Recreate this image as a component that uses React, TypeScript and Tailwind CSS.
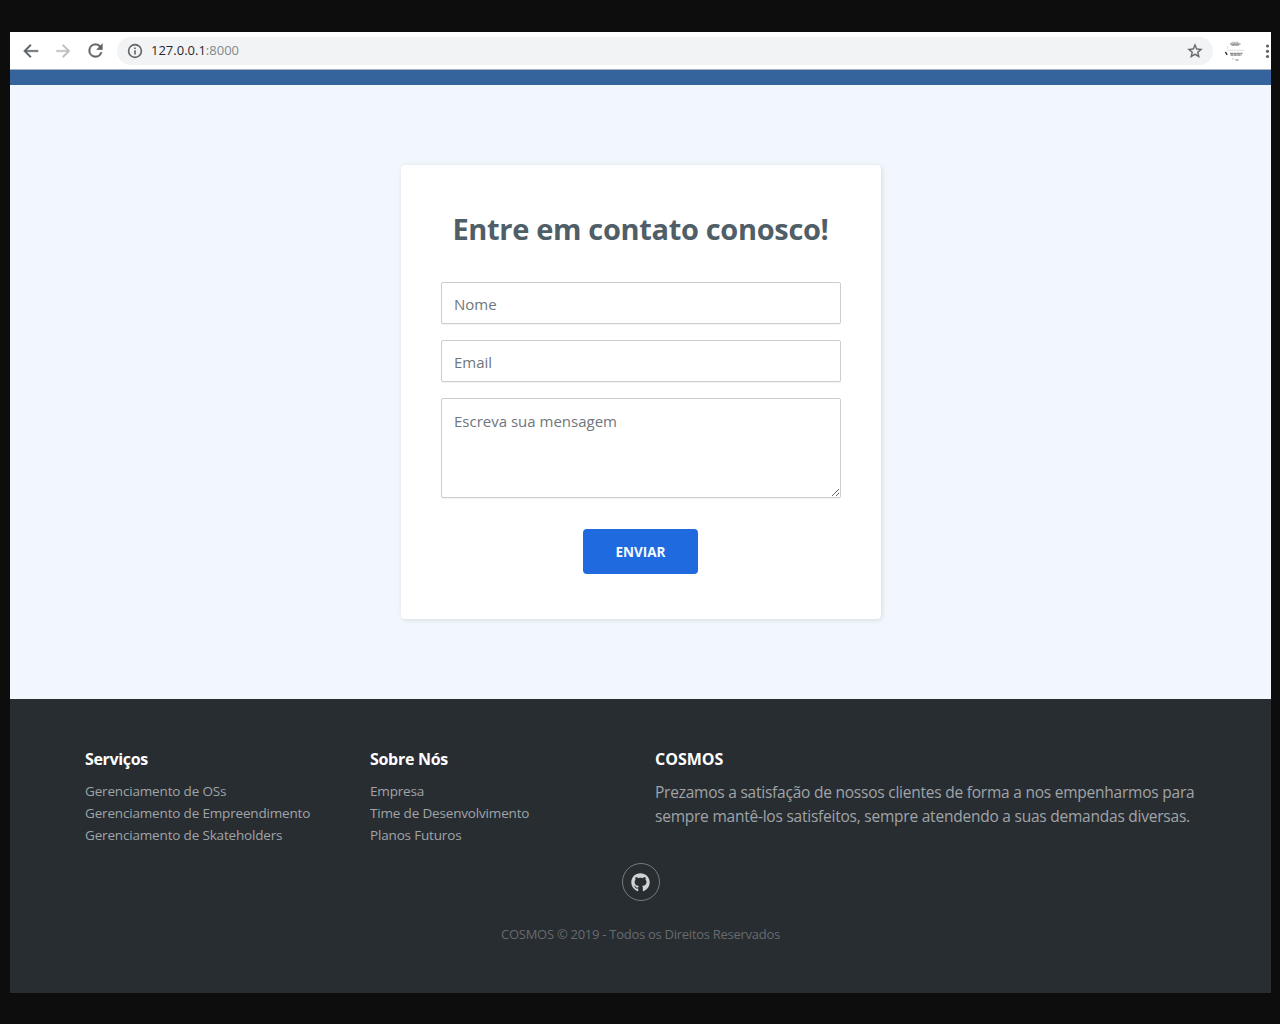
import type { ReactNode } from "react";
import { FaGithub } from "react-icons/fa";

function BrowserBar() {
  return (
    <div className="flex h-[38px] items-center overflow-hidden border-b border-[#a9b3bf] bg-white pl-[11px]">
      <div className="flex shrink-0 items-center gap-3">
        <svg className="size-5" viewBox="0 0 24 24" fill="#5f6368">
          <path d="M20.500 11H6.830l5.590-5.590L11 4l-8 8 8 8 1.410-1.410L6.830 13H20.500v-2z" stroke="#5f6368" strokeWidth=".4" />
        </svg>
        <svg className="size-5" viewBox="0 0 24 24" fill="#bcbec1">
          <path d="M12.500 4l-1.410 1.410L16.670 11H4v2h12.670l-5.580 5.590L12.500 20l8-8z" stroke="#bcbec1" strokeWidth=".4" />
        </svg>
        <svg className="size-[21px]" viewBox="0 0 24 24" fill="#5f6368">
          <path d="M17.65 6.35A7.958 7.958 0 0 0 12 4a8 8 0 1 0 7.73 10h-2.08A6 6 0 1 1 12 6c1.66 0 3.14.69 4.22 1.78L13 11h7V4l-2.35 2.35z" stroke="#5f6368" strokeWidth=".3" />
        </svg>
      </div>
      <div className="ml-[11px] flex h-7 w-[1096px] shrink-0 items-center rounded-full bg-[#f1f3f4] pr-[9px] pl-[10px]">
        <svg className="size-4" viewBox="0 0 16 16" fill="none" stroke="#5f6368" strokeWidth="1.600">
          <circle cx="8" cy="8" r="6.400" />
          <path d="M8 7.200v4.200M8 4.400V6" />
        </svg>
        <span className="ml-2 text-[13px] text-[#26292d]">
          127.0.0.1<span className="text-[#83878b]">:8000</span>
        </span>
        <svg className="ml-auto size-[18px]" viewBox="0 0 24 24" fill="#5f6368">
          <path
            d="M22 9.24l-7.19-.62L12 2 9.19 8.63 2 9.24l5.46 4.73L5.82 21 12 17.27 18.18 21l-1.63-7.03L22 9.24zM12 15.4l-3.76 2.27 1-4.28-3.32-2.88 4.38-.38L12 6.1l1.71 4.04 4.38.38-3.32 2.88 1 4.28L12 15.4z"
            stroke="#5f6368"
            strokeWidth=".3"
          />
        </svg>
      </div>
      <svg className="ml-3 h-5 w-5 shrink-0" viewBox="0 0 20 20" fill="none">
        <path d="M6.500 1.300h7" stroke="#b5b5b5" strokeWidth="1" />
        <path d="M5 2.800h10.500M6.500 4.200h7.500" stroke="#8f8f8f" strokeWidth="1.200" strokeDasharray="2.500 .3" />
        <path d="M3 5l-1 3M2 9.300h17" stroke="#d5d5d5" strokeWidth=".8" />
        <path d="M5 12.300h12.500M5.500 14h11" stroke="#8a8a8a" strokeWidth="1.300" strokeDasharray="3 .4" />
        <path d="M.6 11l1.500 3" stroke="#333" strokeWidth="1.500" />
        <path d="M10.500 19h3" stroke="#777" strokeWidth="1" />
        <path d="M7 18h2" stroke="#bbb" strokeWidth=".8" />
      </svg>
      <svg className="ml-5 h-4 w-[6px] shrink-0" viewBox="0 0 6 16" fill="#5f6368">
        <circle cx="2.500" cy="3" r="1.600" />
        <circle cx="2.500" cy="8.300" r="1.600" />
        <circle cx="2.500" cy="13.500" r="1.600" />
      </svg>
    </div>
  );
}

const fieldClass =
  "block w-full rounded-[2px] border border-[#cbced1] bg-white px-3 text-[15px] text-[#495057] shadow-[0_1px_1px_rgba(0,0,0,0.05)] outline-none placeholder:text-[#6f767c] placeholder:opacity-100";

function ContactForm() {
  return (
    <form
      className="h-[454px] w-[480px] rounded bg-white px-10 pt-11 shadow-[1px_1px_5px_rgba(0,0,0,0.12)]"
      onSubmit={(e) => e.preventDefault()}
    >
      <h1 className="pr-px text-center text-[29px] leading-10 font-bold tracking-[-0.33px] whitespace-nowrap text-[#505e68]">
        Entre em contato conosco!
      </h1>
      <input className={`${fieldClass} mt-[33px] h-[42px] pt-px`} placeholder="Nome" />
      <input className={`${fieldClass} mt-4 h-[42px] pt-px`} placeholder="Email" />
      <textarea
        className={`${fieldClass} mt-4 h-[100px] resize pt-[10px] leading-6`}
        placeholder="Escreva sua mensagem"
      />
      <button
        type="submit"
        className="mt-[31px] ml-[142px] block h-[45px] w-[115px] rounded bg-[#1f6adf] pt-0.5 text-[13.5px] font-bold text-[#f4fbff]"
      >
        ENVIAR
      </button>
    </form>
  );
}

function FooterColumn({ title, children }: { title: string; children: ReactNode }) {
  return (
    <div>
      <h3 className="text-base leading-[18px] font-bold text-white">{title}</h3>
      {children}
    </div>
  );
}

function LinkList({ items }: { items: string[] }) {
  return (
    <ul className="mt-3 text-[13.5px] leading-[22px] tracking-[-0.17px] whitespace-nowrap text-[#a0a4a7]">
      {items.map((item) => (
        <li key={item}>{item}</li>
      ))}
    </ul>
  );
}

function Footer() {
  return (
    <footer className="h-[294px] bg-[#282d32] px-[75px] pt-[51px]">
      <div className="grid h-[113px] grid-cols-[285px_285px_1fr]">
        <div className="tracking-[-0.35px]">
          <FooterColumn title="Serviços">
            <LinkList
              items={["Gerenciamento de OSs", "Gerenciamento de Empreendimento", "Gerenciamento de Skateholders"]}
            />
          </FooterColumn>
        </div>
        <div className="tracking-[-0.3px]">
          <FooterColumn title="Sobre Nós">
            <LinkList items={["Empresa", "Time de Desenvolvimento", "Planos Futuros"]} />
          </FooterColumn>
        </div>
        <FooterColumn title="COSMOS">
          <p className="mt-3 text-[15.5px] leading-6 tracking-[-0.23px] whitespace-nowrap text-[#a0a4a7]">
            Prezamos a satisfação de nossos clientes de forma a nos empenharmos para
            <br />
            sempre mantê-los satisfeitos, sempre atendendo a suas demandas diversas.
          </p>
        </FooterColumn>
      </div>
      <div className="mx-auto flex size-[38px] items-center justify-center rounded-full border border-[#777b7e]">
        <FaGithub className="size-[19px] text-[#d0d2d4]" />
      </div>
      <p className="mt-[23px] text-center text-[13px] leading-5 tracking-[-0.27px] text-[#676b6e]">
        COSMOS © 2019 - Todos os Direitos Reservados
      </p>
    </footer>
  );
}

export default function App() {
  return (
    <div className="h-screen bg-[#0d0d0d] pt-8 pr-[9px] pl-[10px] font-['Open_Sans','Noto_Sans',sans-serif]">
      <BrowserBar />
      <div className="h-[15px] bg-[#35639c]" />
      <main className="flex h-[614px] items-center justify-center bg-[#f2f7fe] pl-px">
        <ContactForm />
      </main>
      <Footer />
    </div>
  );
}
